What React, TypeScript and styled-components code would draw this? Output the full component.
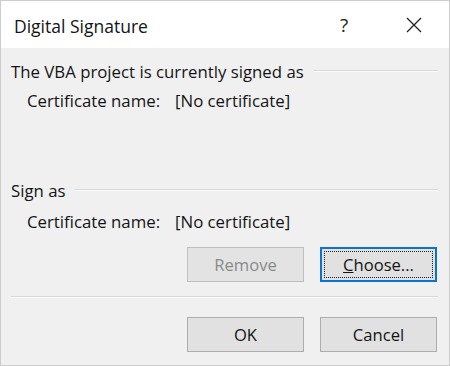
import React from "react";
import styled, { createGlobalStyle } from "styled-components";

const GlobalStyle = createGlobalStyle`
    body {
        margin: 0;
        background: #ffffff;
        font-family: "Open Sans", "Noto Sans", sans-serif;
    }
`;

const Window = styled.div`
    width: 450px;
    height: 366px;
    box-sizing: border-box;
    border: 1px solid #cdcdcd;
    display: flex;
    flex-direction: column;
    background: #f0f0f0;
    color: #141414;
`;

const TitleBar = styled.div`
    height: 47px;
    background: #ffffff;
    display: flex;
    align-items: center;
    padding-left: 13px;
    flex-shrink: 0;
`;

const Title = styled.span`
    font-size: 17.5px;
    flex: 1;
    margin-top: 2px;
`;

const TitleButton = styled.div`
    width: 70px;
    height: 47px;
    display: flex;
    align-items: center;
    justify-content: center;
    font-size: 19px;
    color: #222;
`;

const Body = styled.div`
    flex: 1;
    padding: 14px 11px 0 10px;
    display: flex;
    flex-direction: column;
`;

const GroupHeader = styled.div<{ $top?: number }>`
    display: flex;
    align-items: center;
    gap: 9px;
    height: 20px;
    line-height: 20px;
    font-size: 16.8px;
    margin-top: ${(p) => p.$top ?? 0}px;
`;

const Rule = styled.div`
    flex: 1;
    height: 0;
    border-top: 1px solid #d8d8d8;
    border-bottom: 1px solid #fbfbfb;
    margin-top: -2px;
`;

const FieldRow = styled.div<{ $top: number }>`
    display: flex;
    align-items: center;
    height: 20px;
    line-height: 20px;
    font-size: 16.8px;
    padding-left: 16px;
    margin-top: ${(p) => p.$top}px;
`;

const FieldLabel = styled.span`
    width: 148px;
`;

const ButtonRow = styled.div<{ $top: number }>`
    display: flex;
    justify-content: flex-end;
    gap: 16px;
    padding-right: 1px;
    margin-top: ${(p) => p.$top}px;
`;

const Button = styled.button<{ $focused?: boolean }>`
    width: 117px;
    height: 35px;
    box-sizing: border-box;
    background: #e1e1e1;
    border: ${(p) => (p.$focused ? "2px solid #0a74d0" : "1px solid #adadad")};
    font-family: "Open Sans", "Noto Sans", sans-serif;
    font-size: 16.6px;
    color: #141414;
    padding: 0;
    position: relative;
    &:disabled {
        color: #8a8a8a;
        border-color: #bfbfbf;
        background: #e3e3e3;
    }
`;

const FocusRing = styled.span`
    position: absolute;
    inset: 2px;
    border: 1px dotted #222;
`;

const Separator = styled.div`
    height: 0;
    border-top: 1px solid #d8d8d8;
    border-bottom: 1px solid #fbfbfb;
    margin-top: 14px;
`;

function CloseIcon() {
    return (
        <svg width="16" height="16" viewBox="0 0 16 16">
            <path d="M1 1 L15 15 M15 1 L1 15" stroke="#222" strokeWidth="1.3" fill="none" />
        </svg>
    );
}

function App() {
    return (
        <>
            <GlobalStyle />
            <Window>
                <TitleBar>
                    <Title>Digital Signature</Title>
                    <TitleButton>?</TitleButton>
                    <TitleButton>
                        <CloseIcon />
                    </TitleButton>
                </TitleBar>
                <Body>
                    <GroupHeader>
                        <span>The VBA project is currently signed as</span>
                        <Rule />
                    </GroupHeader>
                    <FieldRow $top={9}>
                        <FieldLabel>Certificate name:</FieldLabel>
                        <span>[No certificate]</span>
                    </FieldRow>
                    <GroupHeader $top={70}>
                        <span>Sign as</span>
                        <Rule />
                    </GroupHeader>
                    <FieldRow $top={11}>
                        <FieldLabel>Certificate name:</FieldLabel>
                        <span>[No certificate]</span>
                    </FieldRow>
                    <ButtonRow $top={15}>
                        <Button disabled>Remove</Button>
                        <Button $focused>
                            <FocusRing />
                            <u>C</u>hoose...
                        </Button>
                    </ButtonRow>
                    <Separator />
                    <ButtonRow $top={19}>
                        <Button>OK</Button>
                        <Button>Cancel</Button>
                    </ButtonRow>
                </Body>
            </Window>
        </>
    );
}

export default App;
